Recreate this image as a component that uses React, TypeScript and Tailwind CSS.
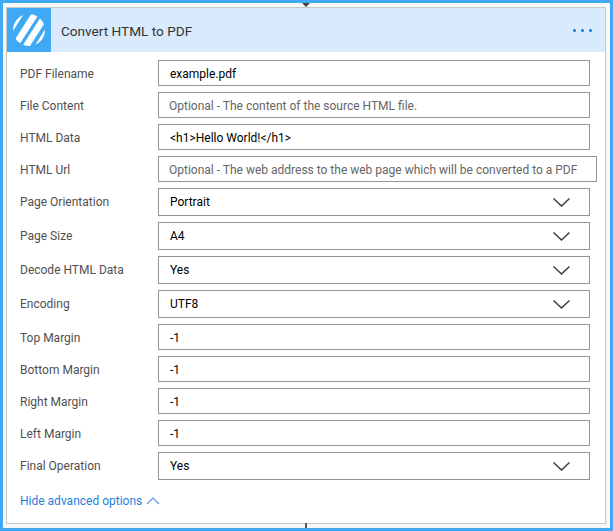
const FONT = "font-['Roboto','Noto_Sans',sans-serif]";

type Field = { label: string; value: string; kind?: "text" | "hint" | "select" };

const fields: Field[] = [
  { label: "PDF Filename", value: "example.pdf" },
  { label: "File Content", value: "Optional - The content of the source HTML file.", kind: "hint" },
  { label: "HTML Data", value: "<h1>Hello World!</h1>" },
  { label: "HTML Url", value: "Optional - The web address to the web page which will be converted to a PDF", kind: "hint" },
  { label: "Page Orientation", value: "Portrait", kind: "select" },
  { label: "Page Size", value: "A4", kind: "select" },
  { label: "Decode HTML Data", value: "Yes", kind: "select" },
  { label: "Encoding", value: "UTF8", kind: "select" },
  { label: "Top Margin", value: "-1" },
  { label: "Bottom Margin", value: "-1" },
  { label: "Right Margin", value: "-1" },
  { label: "Left Margin", value: "-1" },
  { label: "Final Operation", value: "Yes", kind: "select" },
];

function Logo() {
  return (
    <svg width="32" height="32" viewBox="0 0 32 32">
      <defs>
        <clipPath id="disc">
          <circle cx="16" cy="16" r="16" />
        </clipPath>
      </defs>
      <g clipPath="url(#disc)" stroke="#fff" strokeWidth="6.5">
        <path d="M-7 22 L12 -8" />
        <path d="M1 33 L24 -3" />
        <path d="M10 37 L33 1" />
        <path d="M21 39 L40 9" />
      </g>
    </svg>
  );
}

function Row({ label, value, kind = "text" }: Field) {
  const select = kind === "select";
  return (
    <div className="flex items-center">
      <div className={`w-[138px] shrink-0 text-[12px] text-[#505050] ${select ? "" : "pt-[2px]"}`}>{label}</div>
      <div
        className={`flex flex-1 items-center justify-between border border-[#959595] bg-white pr-[19px] text-[12px] ${
          select ? "h-[28px]" : "h-[26px] pt-[2px]"
        } ${kind === "hint" ? "pl-[10px] text-[#666666]" : "pl-[11px] text-black"}`}
      >
        <span className="whitespace-nowrap">{value}</span>
        {select && (
          <svg width="17" height="9" viewBox="0 0 17 9" fill="none" stroke="#3a3a3a" strokeWidth="1.4">
            <path d="M0.5 0.5 L8.5 8 L16.5 0.5" />
          </svg>
        )}
      </div>
    </div>
  );
}

export default function App() {
  return (
    <div className={`relative flex h-[531px] w-[613px] flex-col border-[3px] border-[#3fa9f5] bg-[#f8f8f8] pt-[4px] pb-[4px] pl-[3px] pr-[4px] ${FONT}`}>
      <div className="absolute left-[299px] top-0 h-0 w-0 border-x-[4px] border-t-[4px] border-x-transparent border-t-[#444444]" />
      <div className="absolute bottom-0 left-[302px] h-[5px] w-[2px] bg-[#555555]" />

      <div className="flex flex-1 flex-col border border-[#c8c8c8] bg-white">
        <header className="flex h-[44px] items-center bg-[#d8eafb]">
          <div className="flex h-[44px] w-[44px] items-center justify-center bg-[#3fa9f5]">
            <Logo />
          </div>
          <h1 className="ml-[10px] flex-1 pt-[2px] text-[13.6px] text-[#333333]">Convert HTML to PDF</h1>
          <div className="mr-[13px] mt-[1px] flex gap-[5px]">
            <span className="h-[3px] w-[3px] rounded-full bg-[#0a78e6]" />
            <span className="h-[3px] w-[3px] rounded-full bg-[#0a78e6]" />
            <span className="h-[3px] w-[3px] rounded-full bg-[#0a78e6]" />
          </div>
        </header>

        <div className="flex flex-col gap-[6px] pl-[13px] pr-[15px] pt-[8px]">
          {fields.map((f) => (
            <Row key={f.label} {...f} />
          ))}
        </div>

        <div className="mt-[12px] flex items-center gap-[4px] pl-[13px] text-[12px] text-[#1f7fe0]">
          <span>Hide advanced options</span>
          <svg width="14" height="8" viewBox="0 0 14 8" fill="none" stroke="#5a9be0" strokeWidth="1.2">
            <path d="M1 7 L7 1 L13 7" />
          </svg>
        </div>
      </div>
    </div>
  );
}
